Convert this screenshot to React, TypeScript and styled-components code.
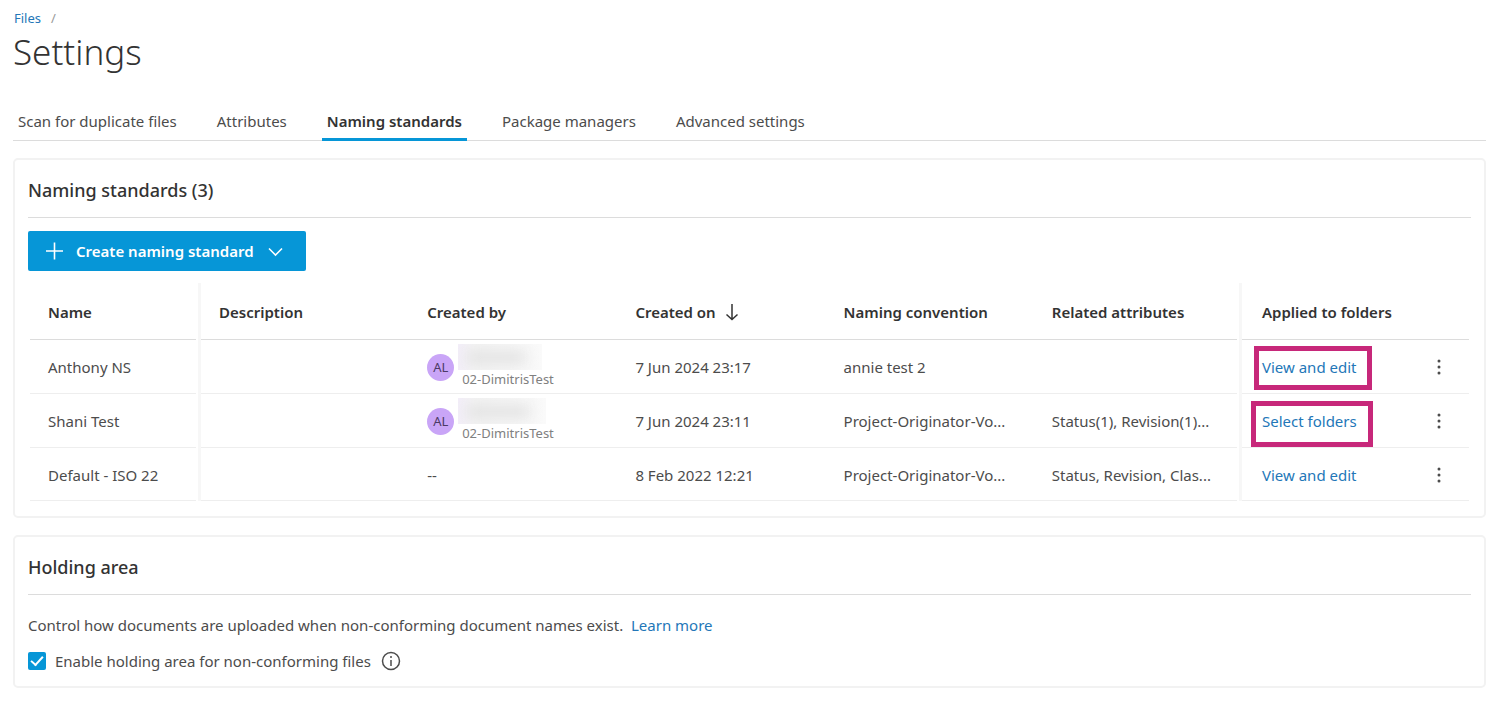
import React from "react";
import styled, { createGlobalStyle, css } from "styled-components";

const GlobalStyle = createGlobalStyle`
  *, *::before, *::after { box-sizing: border-box; }
  body {
    margin: 0;
    background: #fff;
    color: #4c4c4c;
    font-family: "Noto Sans", "Open Sans", sans-serif;
    font-size: 15px;
    line-height: 20px;
  }
  button, input { font: inherit; }
`;

const Page = styled.main`
  padding: 8px 26px 16px 13px;
`;

const TextLink = styled.a`
  color: #2377b8;
  text-decoration: none;
`;

const Breadcrumb = styled.nav`
  display: flex;
  gap: 10px;
  padding-left: 1px;
  font-size: 13px;
  color: #999;
`;

const PageTitle = styled.h1`
  margin: 0;
  padding-top: 2px;
  font-size: 35px;
  line-height: 44px;
  font-weight: 300;
  color: #333;
`;

const Tabs = styled.nav`
  display: flex;
  gap: 30px;
  margin-top: 29px;
  border-bottom: 1px solid #dcdcdc;
`;

const Tab = styled.button<{ $active?: boolean }>`
  margin: 0 0 -1px;
  padding: 8px 5px 7px;
  border: 0;
  border-bottom: 3px solid transparent;
  background: none;
  color: #4c4c4c;
  white-space: nowrap;
  ${({ $active }) =>
    $active &&
    css`
      border-bottom-color: #0696d7;
      color: #333;
      font-weight: 600;
    `}
`;

const Card = styled.section`
  margin-top: 17px;
  padding: 0 13px 15px;
  border: 2px solid #f2f2f2;
  border-radius: 5px;
`;

const CardTitle = styled.h2`
  margin: 0 0 13px;
  padding: 19px 0 15px;
  border-bottom: 1px solid #dcdcdc;
  font-size: 18px;
  line-height: 23px;
  font-weight: 500;
  color: #333;
`;

const PrimaryButton = styled.button`
  display: flex;
  align-items: center;
  height: 40px;
  padding: 0 22px 0 17px;
  border: 0;
  border-radius: 2px;
  background: #0696d7;
  color: #fff;
  font-weight: 600;
  gap: 12px;
`;

const Table = styled.table`
  width: 100%;
  margin-top: 12px;
  padding: 0 2px;
  border-collapse: separate;
  border-spacing: 0;
  table-layout: fixed;
`;

const cell = css<{ $divider?: boolean }>`
  padding: 0 18px;
  text-align: left;
  white-space: nowrap;
  overflow: hidden;
  text-overflow: ellipsis;
  background: linear-gradient(var(--line), var(--line)) left bottom / 100% 1px no-repeat;
  ${({ $divider }) =>
    $divider &&
    css`
      border-right: 3px solid #f7f7f7;
      background-size: calc(100% - 2px) 1px;
    `}
`;

const HeadCell = styled.th<{ $divider?: boolean }>`
  --line: #dcdcdc;
  height: 57px;
  color: #333;
  font-weight: 600;
  ${cell}
`;

const Cell = styled.td<{ $divider?: boolean }>`
  --line: #eee;
  height: 54px;
  ${cell}
  tr:last-child > & {
    height: 53px;
  }
`;

const FoldersHeadCell = styled(HeadCell)`
  padding-left: 20px;
`;

const FoldersCell = styled(Cell)`
  padding-left: 20px;
  overflow: visible;
`;

const Col = styled.col<{ $w?: number }>`
  width: ${({ $w }) => ($w ? `${$w}px` : "auto")};
`;

const SortLabel = styled.span`
  display: flex;
  align-items: center;
  gap: 9px;
`;

const Person = styled.div`
  display: flex;
  align-items: center;
  gap: 4px;
`;

const Avatar = styled.span`
  flex: none;
  width: 27px;
  height: 27px;
  border-radius: 50%;
  background: #c9a5f7;
  color: #4c3a66;
  font-size: 13px;
  line-height: 27px;
  text-align: center;
`;

const PersonText = styled.div`
  display: flex;
  flex-direction: column;
  padding-bottom: 2px;
`;

const RedactedName = styled.span<{ $w: number }>`
  display: block;
  position: relative;
  width: ${({ $w }) => $w}px;
  height: 26px;
  overflow: hidden;
  background: linear-gradient(90deg, #f3eef9, #f4f4f4 20%, #fafafa);
  &::after {
    content: "";
    position: absolute;
    inset: 7px 16px 6px 8px;
    background: #e2e2e2;
    filter: blur(7px);
  }
`;

const Company = styled.span`
  padding-left: 4px;
  color: #808080;
  font-size: 13px;
  line-height: 18px;
`;

const FolderLink = styled(TextLink)<{ $mark?: "view" | "select" }>`
  position: relative;
  ${({ $mark }) =>
    $mark &&
    css`
      &::after {
        content: "";
        position: absolute;
        border: 5px solid #c7287a;
        pointer-events: none;
        ${$mark === "view"
          ? "left: -8px; top: -11px; width: 118px; height: 44px;"
          : "left: -11px; top: -10px; width: 122px; height: 46px;"}
      }
    `}
`;

const MenuButton = styled.button`
  display: flex;
  margin-left: 2px;
  padding: 0;
  border: 0;
  background: none;
  color: #4c4c4c;
`;

const Description = styled.p`
  margin: 0;
  padding-top: 7px;
`;

const Option = styled.div`
  display: flex;
  align-items: center;
  gap: 10px;
  margin-top: 16px;
`;

const OptionLabel = styled.label`
  display: flex;
  align-items: center;
  gap: 9px;
`;

const Checkbox = styled.input`
  appearance: none;
  width: 18px;
  height: 18px;
  margin: 0;
  border-radius: 2px;
  background: #0696d7;
  display: grid;
  place-items: center;
  &:checked::before {
    content: "";
    width: 12px;
    height: 7px;
    margin-top: -4px;
    border: solid #fff;
    border-width: 0 0 2px 2px;
    transform: rotate(-48deg);
  }
`;

const InfoButton = styled(MenuButton)`
  margin: 0;
`;

const PlusIcon = () => (
  <svg width="19" height="18" viewBox="0 0 19 18" fill="none" stroke="currentColor" strokeWidth="1.6">
    <path d="M9.5 0.5v17M1 9h17" />
  </svg>
);

const ChevronIcon = () => (
  <svg width="18" height="16" viewBox="0 0 18 16" fill="none" stroke="currentColor" strokeWidth="1.6">
    <path d="M3 5.5l6.5 6.5L16 5.5" />
  </svg>
);

const SortIcon = () => (
  <svg width="14" height="18" viewBox="0 0 14 18" fill="none" stroke="currentColor" strokeWidth="1.5">
    <path d="M7 1v15.5M1.5 11.5L7 16.5l5.5-5" />
  </svg>
);

const MoreIcon = () => (
  <svg width="20" height="20" viewBox="0 0 20 20" fill="currentColor">
    <circle cx="10" cy="4" r="1.5" />
    <circle cx="10" cy="10" r="1.5" />
    <circle cx="10" cy="16" r="1.5" />
  </svg>
);

const InfoIcon = () => (
  <svg width="20" height="20" viewBox="0 0 20 20" fill="none" stroke="currentColor" strokeWidth="1.5">
    <circle cx="10" cy="10" r="8.5" />
    <path d="M10 9v6" />
    <circle cx="10" cy="6" r="1" fill="currentColor" stroke="none" />
  </svg>
);

type Row = {
  name: string;
  person?: number;
  created: string;
  convention: string;
  attributes: string;
  folders: string;
  mark?: "view" | "select";
};

const rows: Row[] = [
  { name: "Anthony NS", person: 84, created: "7 Jun 2024 23:17", convention: "annie test 2", attributes: "", folders: "View and edit", mark: "view" },
  { name: "Shani Test", person: 88, created: "7 Jun 2024 23:11", convention: "Project-Originator-Vo...", attributes: "Status(1), Revision(1)...", folders: "Select folders", mark: "select" },
  { name: "Default - ISO 22", created: "8 Feb 2022 12:21", convention: "Project-Originator-Vo...", attributes: "Status, Revision, Clas...", folders: "View and edit" },
];

const tabs = ["Scan for duplicate files", "Attributes", "Naming standards", "Package managers", "Advanced settings"];

export default function App() {
  return (
    <>
      <GlobalStyle />
      <Page>
        <Breadcrumb aria-label="Breadcrumb">
          <TextLink href="#files">Files</TextLink>
          <span>/</span>
        </Breadcrumb>
        <PageTitle>Settings</PageTitle>
        <Tabs>
          {tabs.map((tab) => (
            <Tab key={tab} type="button" $active={tab === "Naming standards"}>
              {tab}
            </Tab>
          ))}
        </Tabs>

        <Card>
          <CardTitle>Naming standards (3)</CardTitle>
          <PrimaryButton type="button">
            <PlusIcon />
            Create naming standard
            <ChevronIcon />
          </PrimaryButton>
          <Table>
            <colgroup>
              <Col $w={171} />
              <Col />
              <Col />
              <Col />
              <Col />
              <Col />
              <Col $w={167} />
              <Col $w={60} />
            </colgroup>
            <thead>
              <tr>
                <HeadCell $divider>Name</HeadCell>
                <HeadCell>Description</HeadCell>
                <HeadCell>Created by</HeadCell>
                <HeadCell>
                  <SortLabel>
                    Created on
                    <SortIcon />
                  </SortLabel>
                </HeadCell>
                <HeadCell>Naming convention</HeadCell>
                <HeadCell $divider>Related attributes</HeadCell>
                <FoldersHeadCell colSpan={2}>Applied to folders</FoldersHeadCell>
              </tr>
            </thead>
            <tbody>
              {rows.map((row) => (
                <tr key={row.name}>
                  <Cell $divider>{row.name}</Cell>
                  <Cell />
                  <Cell>
                    {row.person ? (
                      <Person>
                        <Avatar>AL</Avatar>
                        <PersonText>
                          <RedactedName $w={row.person} />
                          <Company>02-DimitrisTest</Company>
                        </PersonText>
                      </Person>
                    ) : (
                      "--"
                    )}
                  </Cell>
                  <Cell>{row.created}</Cell>
                  <Cell>{row.convention}</Cell>
                  <Cell $divider>{row.attributes}</Cell>
                  <FoldersCell>
                    <FolderLink href="#folders" $mark={row.mark}>
                      {row.folders}
                    </FolderLink>
                  </FoldersCell>
                  <Cell>
                    <MenuButton type="button" aria-label={`Actions for ${row.name}`}>
                      <MoreIcon />
                    </MenuButton>
                  </Cell>
                </tr>
              ))}
            </tbody>
          </Table>
        </Card>

        <Card>
          <CardTitle>Holding area</CardTitle>
          <Description>
            Control how documents are uploaded when non-conforming document names exist.&nbsp;{" "}
            <TextLink href="#learn">Learn more</TextLink>
          </Description>
          <Option>
            <OptionLabel>
              <Checkbox type="checkbox" defaultChecked />
              Enable holding area for non-conforming files
            </OptionLabel>
            <InfoButton type="button" aria-label="About the holding area">
              <InfoIcon />
            </InfoButton>
          </Option>
        </Card>
      </Page>
    </>
  );
}
